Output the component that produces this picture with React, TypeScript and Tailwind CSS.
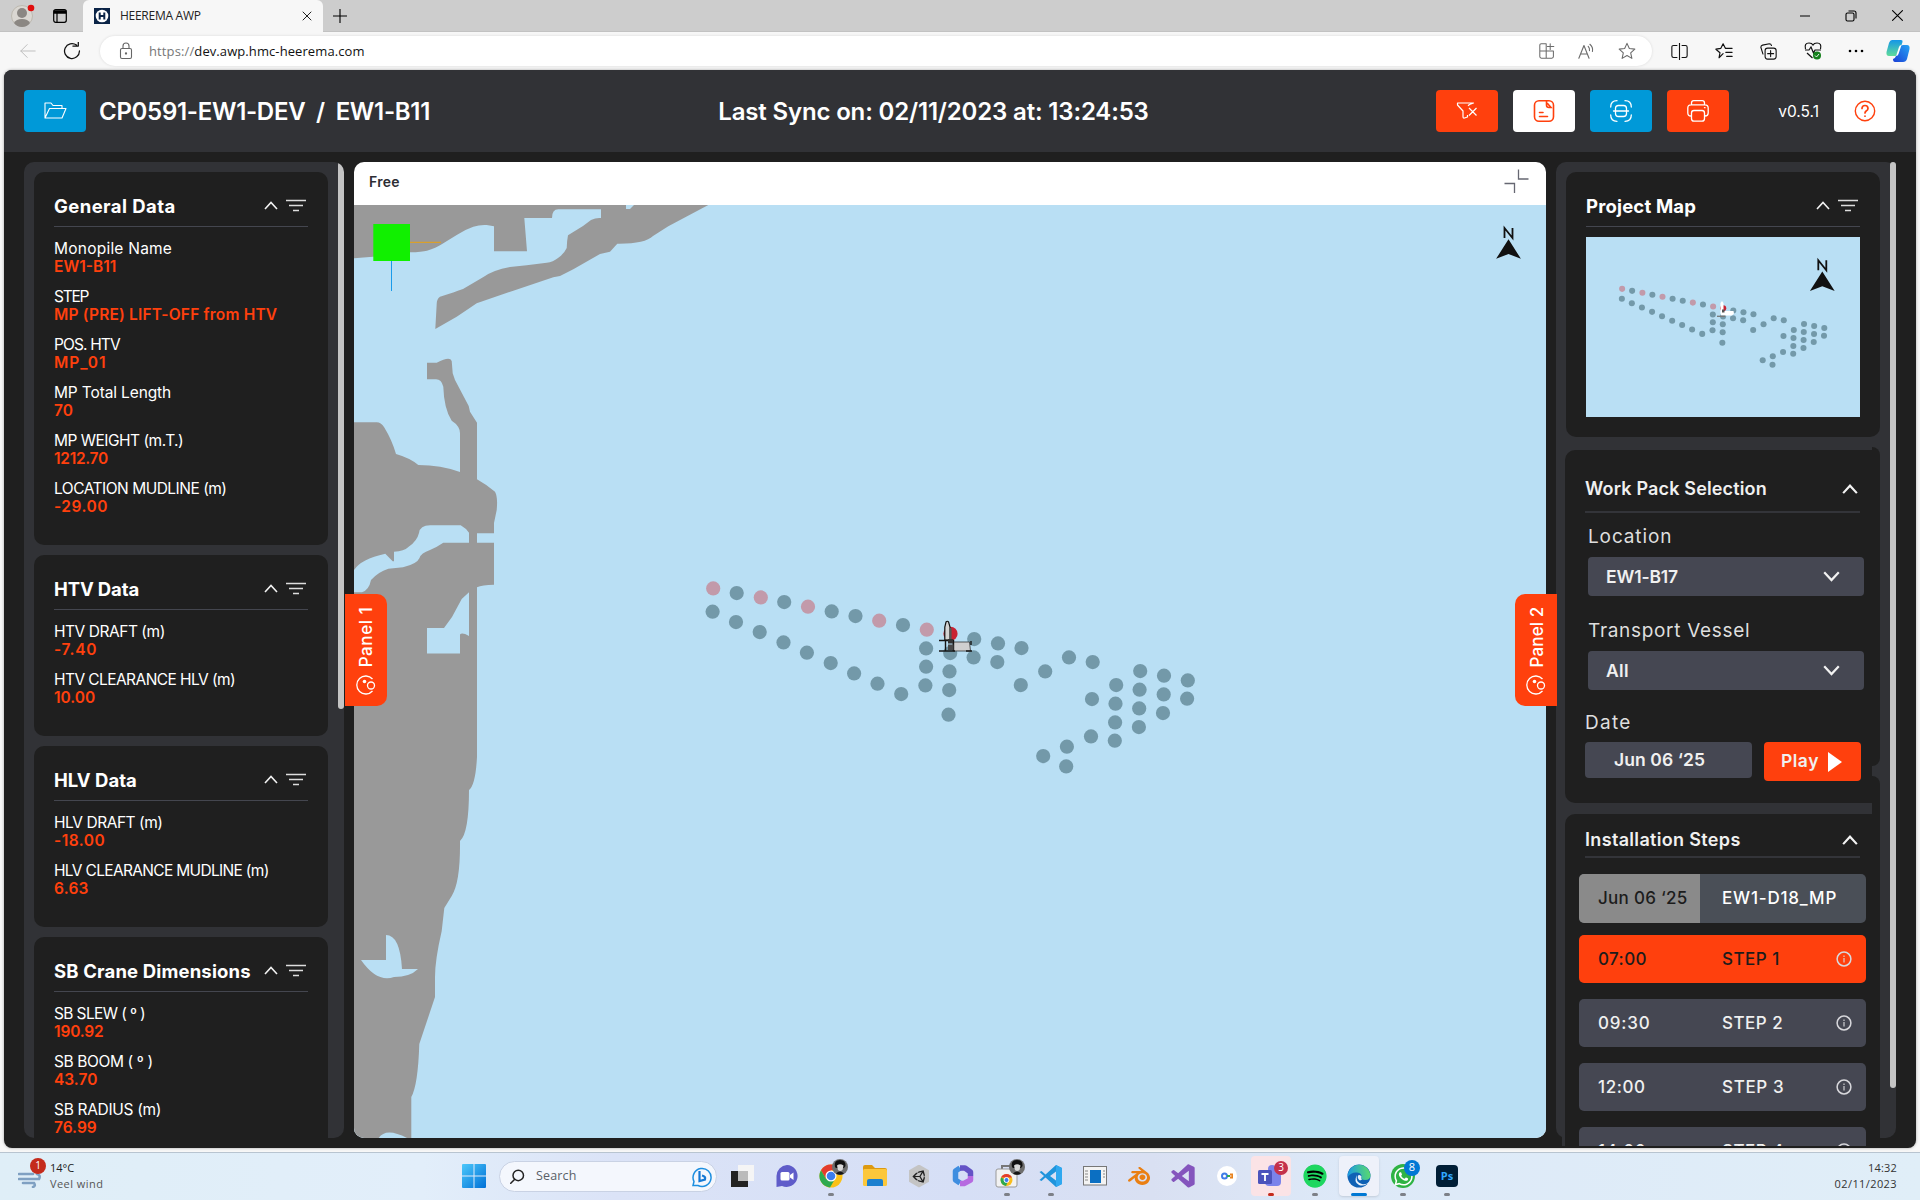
import { useLayoutEffect, useRef } from "react";
import type { ReactNode } from "react";
import { FaSpotify, FaUnity, FaWhatsapp } from "react-icons/fa";
import { SiBlender } from "react-icons/si";
import { BiLogoVisualStudio } from "react-icons/bi";

/* Text whose letter spacing is set so that it spans `w` pixels. */
function Fit({ w, className = "", children }: { w: number; className?: string; children: string }) {
  const ref = useRef<HTMLSpanElement>(null);
  useLayoutEffect(() => {
    const el = ref.current;
    if (!el) return;
    el.style.letterSpacing = "0px";
    el.style.letterSpacing = `${((w - el.offsetWidth) / children.length).toFixed(3)}px`;
  }, [w, children]);
  return (
    <span ref={ref} className={`inline-block whitespace-pre ${className}`}>
      {children}
    </span>
  );
}

const PINK: [number, number][] = [
  [713, 588], [760.6, 597], [807.8, 606.3], [879, 620.3], [926.6, 629.3],
];
const TEAL: [number, number][] = [
  [736.5, 592.7], [784, 601.7], [831.5, 611], [855.3, 615.7], [902.8, 624.7],
  [712.4, 611.3], [735.8, 621.7], [759.5, 631.7], [783.3, 642], [806.7, 652.3],
  [830.5, 662.7], [853.9, 673], [877.3, 683.3], [901, 693.7],
  [925.9, 648], [925.9, 666.3], [925.2, 685],
  [950, 652.7], [949.3, 671], [949, 689.7], [948.3, 714.3],
  [974, 638.7], [973.4, 657], [997.8, 643], [997.1, 661.7], [1021.3, 647.7],
  [1020.6, 684.7], [1045, 671], [1068.8, 657], [1092.5, 661.7], [1091.8, 698.7],
  [1116, 684.7], [1115.3, 703.3], [1114.9, 722], [1114.6, 740.3],
  [1140, 670.7], [1139.4, 689.3], [1139, 708], [1138.7, 726.7],
  [1163.8, 675.3], [1163.5, 694], [1162.8, 712.7], [1187.6, 680], [1186.9, 698.3],
  [1090.8, 736], [1066.7, 746.3], [1066, 766], [1043, 755.7],
];

function Farm() {
  return (
    <g>
      {TEAL.map(([x, y]) => (
        <circle key={`${x}-${y}`} cx={x + 0.2} cy={y + 0.4} r="7.1" fill="#7399a9" />
      ))}
      {PINK.map(([x, y]) => (
        <circle key={`${x}-${y}`} cx={x + 0.2} cy={y + 0.4} r="7.1" fill="#c29aaa" />
      ))}
      <circle cx="950.5" cy="633.8" r="7.1" fill="#c92233" />
    </g>
  );
}

function North({ x, y }: { x: number; y: number }) {
  return (
    <g transform={`translate(${x} ${y})`}>
      <path d="M-4 -1.300V-11.300L4 -1.300V-11.300" fill="none" stroke="#111" strokeWidth="1.800" />
      <path d="M0 0L12.400 19.500L0 14.800L-12.400 19.500Z" fill="#111" />
    </g>
  );
}

function MainMap() {
  return (
    <svg viewBox="354 205 1192 933" className="block h-[933px] w-full bg-[#b9dff4]">
      <g fill="#999">
        <path d="M354 205V258.3L373 256.7L410 252.3Q422 252 427 250.7Q436 248 441.7 244.3L456.7 235Q465 229.500 473.3 226.7Q480 224.500 486.700 225L494 226.300V251.300H527L524.300 218H552Q552 209.300 558.300 209.300H601V218Q596 217.500 591 220L583 226L568 235.300Q567 240 566.700 248Q564 254 558 258Q553 262 546.700 262.700L526.700 265.300L510 267Q493 270 483 277.300L463 289Q455 292 440 296.700Q436.700 299 436.700 304L435.300 329L456.700 316.700Q467 310 476.700 303.300L513.300 290.700L553.300 277.300L560 276L573.300 269.300L600 254L610 251.700L617.300 243.700Q645 244 653 236L668.300 226.300L708.300 205Z" />
        <path d="M427 362.700H436.700Q450 356 451.700 361L452.700 373.300L455 380L468.700 406L470 411.700L477 422.700V479.300Q487 485 495 491.700Q498 497 496.700 510L494 523V533.300H477V542.700H494V584.700Q482 585 477 587.300V757Q475.500 785 469 790Q469 833 460 841Q460.500 882 451.700 896L444.300 908L441.700 931Q435 960 435 977V997L419.300 1044Q418 1085 411.300 1097V1138H354V422.300H376.700Q381 422.500 384 427Q392 440 396 454Q410 458 418.300 465Q441 465 460 472V433.300Q460 426 451.700 420.700Q444 409 443.300 386.700Q441.500 379.300 436 379.300H427Z" />
      </g>
      <g fill="#b9dff4">
        <path d="M626 205V209H630L634 205Z" />
        <path d="M354 570Q361 559 385.300 553.700L392.700 561.300H394V551.700Q404 551.500 409 546.500Q417 541 419 533Q420 525.300 430 525.300H460.700L466 529L469 532.700V542.700H443.300Q437 547 430 550Q421 553 419.500 558Q417 564 403 567.300L388.300 568.700Q378 572 371 580Q369 590 362 592.300H354Z" />
        <path d="M427 628H444L452 617L461.700 599L469 592.300V636Q462 632 460 634.500V653.600H427Z" />
        <path d="M361 960H386V935Q400 935 402 969H418Q410 977 394 977Q377 983 361 960Z" />
        <path d="M378.700 1138Q386 1127 407 1138Z" />
      </g>
      <rect x="373.300" y="224" width="36.700" height="37" fill="#11f000" />
      <path d="M410 242.300H441" stroke="#d9a02c" strokeWidth="1.300" />
      <path d="M391.500 261V291" stroke="#1a9bea" strokeWidth="1" />
      <Farm />
      <path d="M944.800 640V627L946 622Q947.300 620.500 948.600 622L950 627V640Z" fill="#d4d4d4" stroke="#111" strokeWidth="1.200" />
      <path d="M950.800 628V639" stroke="#555" strokeWidth="1.600" />
      <path d="M953 642H969.500L970.500 651H953Z" fill="#cfcfcf" stroke="#333" strokeWidth=".8" />
      <path d="M939 640.500H954M939 651H955M945.500 640V651M953.500 640V651M966 651H972M971 641V645" stroke="#161616" strokeWidth="1.400" fill="none" />
      <rect x="948" y="639" width="5" height="4.500" fill="#333" />
      <rect x="948" y="644.500" width="5.500" height="5.500" fill="#4a4a4a" />
      <North x={1508.5} y={239.3} />
    </svg>
  );
}

function MiniMap() {
  return (
    <svg viewBox="1586 237 274 180" className="block h-[180px] w-[274px] bg-[#b9dff4]">
      <g transform="translate(1318.3 38.200) scale(.426)">
        <Farm />
      </g>
      <path d="M1720.500 313V303L1722 301L1723.500 303V311H1733.500L1734 313.500L1732 315.500H1721Z" fill="#fff" />
      <path d="M1717 316.300H1725" stroke="#777" strokeWidth="1.300" />
      <rect x="1722" y="309.500" width="2.500" height="3" fill="#555" />
      <North x={1822.3} y={271.5} />
    </svg>
  );
}

/* ---------- browser chrome ---------- */

function Ico({ children, s = 20, className = "", w = 1 }: { children: ReactNode; s?: number; className?: string; w?: number }) {
  return (
    <svg viewBox="0 0 20 20" width={s} height={s} fill="none" stroke="currentColor" strokeWidth={w} strokeLinecap="round" strokeLinejoin="round" className={`shrink-0 ${className}`}>
      {children}
    </svg>
  );
}

function TabBar() {
  return (
    <div className="flex h-8 border-b border-[#c2c2c2] bg-[#cdcdcd]">
      <div className="flex w-[83px] items-center pl-[9px]">
        <svg viewBox="0 0 26 26" className="size-[26px]">
          <circle cx="13" cy="13" r="10.500" fill="#dad7d2" stroke="#bdb9b0" />
          <circle cx="13" cy="10" r="5" fill="#8b8783" />
          <path d="M5 20Q7 16 13 16T21 20Q18 24 13 24T5 20Z" fill="#8b8783" />
          <circle cx="22" cy="5" r="3.300" fill="#e00d0d" />
        </svg>
        <svg viewBox="0 0 14 14" className="ml-[18px] size-[14px]" fill="none" stroke="#000" strokeWidth="1.200">
          <rect x=".7" y=".7" width="12.600" height="12.600" rx="2" />
          <path d="M.7 3H13.300" strokeWidth="3.500" />
          <path d="M4 3V13" />
        </svg>
      </div>
      <div className="flex h-8 w-[240px] items-center rounded-t-md bg-[#f7f7f7] pl-[11px]">
        <svg viewBox="0 0 16 16" className="size-4">
          <rect width="16" height="16" fill="#0b2447" />
          <circle cx="8" cy="8" r="6.300" fill="#fff" />
          <path d="M5.700 4.500V11.500M10.300 4.500V11.500M5.700 8H10.300" stroke="#0b2447" strokeWidth="2" />
        </svg>
        <Fit w={81} className="ml-[10px] text-[12px] text-[#222]">HEEREMA AWP</Fit>
        <Ico s={10} w={2} className="ml-[101px] mr-auto text-[#222]">
          <path d="M2 2L18 18M18 2L2 18" />
        </Ico>
      </div>
      <Ico s={14} w={1.6} className="ml-[10px] mt-[9px] text-black">
        <path d="M10 0V20M0 10H20" />
      </Ico>
      <div className="ml-auto flex items-center pr-[17px] text-black">
        <Ico s={10} w={2}><path d="M0 10H20" /></Ico>
        <svg viewBox="0 0 12 12" className="ml-[35px] size-3" fill="none" stroke="#000" strokeWidth="1.100">
          <rect x="1" y="3" width="8" height="8" rx="1.500" />
          <path d="M3.500 1H9Q11 1 11 3V8.500" />
        </svg>
        <Ico s={11} w={2} className="ml-[35px]"><path d="M1 1L19 19M19 1L1 19" /></Ico>
      </div>
    </div>
  );
}

function UrlBar() {
  return (
    <div className="flex h-[38px] items-center bg-[#f7f7f7]">
      <Ico s={16} w={1.2} className="ml-5 text-[#bdbdbd]"><path d="M19 10H1M9 2L1 10L9 18" /></Ico>
      <Ico s={18} w={1.4} className="ml-[27px] text-[#111]">
        <path d="M18.300 10A8.300 8.300 0 1 1 15 3.400M11 4.500H17V0" />
      </Ico>
      <div className="ml-[19px] flex h-[30px] w-[1552px] items-center rounded-full bg-white pl-[18px] shadow-[0_0_3px_rgba(0,0,0,.12)]">
        <svg viewBox="0 0 16 18" className="h-[18px] w-4" fill="none" stroke="#666" strokeWidth="1.100">
          <rect x="2.500" y="6.500" width="11" height="10" rx="1.500" />
          <path d="M5 6V4A3 3 0 0 1 11 4V6" />
          <circle cx="8" cy="11.500" r=".6" fill="#666" />
        </svg>
        <span className="ml-[15px] flex pt-px text-[13px]">
          <Fit w={45} className="text-[#777]">https://</Fit>
          <Fit w={170} className="text-[#111]">dev.awp.hmc-heerema.com</Fit>
        </span>
        <div className="ml-auto mr-4 flex items-center gap-[23px] text-[#6b6b6b]">
          <Ico s={16} w={1.3}><path d="M9 1H3Q1 1 1 3V17Q1 19 3 19H16Q18 19 18 17V10H1M9 1V19M14 1V8M10.500 4.500H18.500" /></Ico>
          <Ico s={17} w={1.3}><path d="M1 18L7 3L13 18M3 13H11M12 4Q14 6 13.500 9M14 1.500Q18 5 17 10" /></Ico>
          <Ico s={18} w={1.2}><path d="M10 1.500L12.600 7.200L18.700 7.900L14.100 12.100L15.400 18.200L10 15.100L4.600 18.200L5.900 12.100L1.300 7.900L7.400 7.200Z" /></Ico>
        </div>
      </div>
      <div className="ml-[19px] flex items-center gap-[27px] text-[#111]">
        <Ico s={17} w={1.3}><path d="M7 3H3Q1 3 1 5V15Q1 17 3 17H7M13 3H17Q19 3 19 5V15Q19 17 17 17H13M10 0V20" /></Ico>
        <Ico s={18} w={1.3}><path d="M9 13L4.500 17.500L5.500 12L1 8L6.500 7L9 2L11.500 7M12 7H19M12 11.500H19M13 16H19" /></Ico>
        <Ico s={17} w={1.3}>
          <rect x="6" y="6" width="13" height="13" rx="3" />
          <path d="M12.500 9V16M9 12.500H16M3.500 13L1 5Q1 3 3 2.500L11 .8Q13 .8 13.500 3" />
        </Ico>
        <svg viewBox="0 0 18 18" className="size-[18px]" fill="none" stroke="#111" strokeWidth="1.200">
          <path d="M1.500 7Q0 1 5 1Q8 1 9 3Q10 1 13 1Q18 1 16.500 7M1 8H5L7 5L9.500 11L11 8H17M3 11L8.500 16" />
          <circle cx="13" cy="13.500" r="4" fill="#15801c" stroke="none" />
          <path d="M11 13.500L12.500 15L15 12" stroke="#fff" strokeWidth=".9" />
        </svg>
        <svg viewBox="0 0 16 4" className="-ml-px h-1 w-4"><circle cx="2" cy="2" r="1.300" /><circle cx="8" cy="2" r="1.300" /><circle cx="14" cy="2" r="1.300" /></svg>
      </div>
      <svg viewBox="0 0 24 24" className="ml-auto mr-[10px] size-6">
        <defs>
          <linearGradient id="cpA" x1="0" y1="0" x2="0" y2="1"><stop stopColor="#1496e8" /><stop offset="1" stopColor="#5fdc9a" /></linearGradient>
          <linearGradient id="cpB" x1="0" y1="1" x2="1" y2="0"><stop stopColor="#1b3fd6" /><stop offset="1" stopColor="#25a4f4" /></linearGradient>
        </defs>
        <path d="M6 1H15Q17 1 16.500 3L12.500 15Q12 17 9 17H3Q0 17 .5 13L3 4Q4 1 6 1Z" fill="url(#cpA)" />
        <path d="M17 6H21Q24 6 23.500 10L21 20Q20 23 17 23H9Q7 23 7 20Q9 20 10 17L14 8Q15 6 17 6Z" fill="url(#cpB)" />
        <path d="M10 17L13 8Q13.500 6 15.500 6L12.500 15Q12 17 10 17Z" fill="#fff" />
      </svg>
    </div>
  );
}

/* ---------- application header ---------- */

function HeaderButton({ tone, className = "", children }: { tone: string; className?: string; children: ReactNode }) {
  return <button className={`flex h-[42px] w-[62px] items-center justify-center rounded ${tone} ${className}`}>{children}</button>;
}

function Header() {
  return (
    <header className="grid h-[82px] grid-cols-[1fr_auto_1fr] items-center rounded-t-lg bg-[#313236] px-5 text-white">
      <div className="flex items-center">
        <HeaderButton tone="bg-[#0099d8]">
          <svg viewBox="0 0 24 20" className="h-5 w-6" fill="none" stroke="#fff" strokeWidth="1.100" strokeLinejoin="round">
            <path d="M2 17V2H8L10 4.500H19V7.500M2 17L6.500 7.500H23L19 17Z" />
          </svg>
        </HeaderButton>
        <h1 className="mt-[2px] ml-[13px] text-[24px] font-semibold [word-spacing:5px]">
          <Fit w={331}>CP0591-EW1-DEV / EW1-B11</Fit>
        </h1>
      </div>
      <div className="mt-[2px] -ml-[53px] text-[24px] font-semibold">
        <Fit w={430}>Last Sync on: 02/11/2023 at: 13:24:53</Fit>
      </div>
      <div className="flex items-center justify-end">
        <HeaderButton tone="bg-[#ff400d]">
          <svg viewBox="0 0 22 20" className="h-5 w-[22px]" fill="none" stroke="#fff" strokeWidth="1.200" strokeLinejoin="round">
            <path d="M12 4.800L13.500 3.500L17.500 2H1.500V4L7 10V15.500Q7 17.500 8.500 17L11.500 16V14M13 7L20.500 14.500M20.500 7L13 14.500" />
          </svg>
        </HeaderButton>
        <HeaderButton tone="bg-white" className="ml-[15px]">
          <svg viewBox="0 0 22 22" className="size-[22px]" fill="none" stroke="#ff400d" strokeWidth="1.600" strokeLinecap="round">
            <rect x="1.500" y=".8" width="19" height="20.400" rx="4.500" />
            <path d="M13.500 1V5Q13.500 7.500 16 7.500H18L14.500 3.500M6.500 12.500H10M6.500 16.500H14.500" />
          </svg>
        </HeaderButton>
        <HeaderButton tone="bg-[#0099d8]" className="ml-[15px]">
          <svg viewBox="0 0 22 22" className="size-[22px]" fill="none" stroke="#fff" strokeWidth="1.300" strokeLinecap="round">
            <path d="M.7 7Q.7 .7 7 .7M15 .7Q21.300 .7 21.300 7M21.300 15Q21.300 21.300 15 21.300M7 21.300Q.7 21.300 .7 15M3.500 11H18.500" />
            <rect x="5.500" y="5.500" width="11" height="11" rx="3" />
          </svg>
        </HeaderButton>
        <HeaderButton tone="bg-[#ff400d]" className="ml-[15px]">
          <svg viewBox="0 0 22 22" className="size-[22px]" fill="none" stroke="#fff" strokeWidth="1.300" strokeLinecap="round">
            <path d="M4.500 4.800V3Q4.500 .7 6.700 .7H15.300Q17.500 .7 17.500 3V4.800M4 16Q.8 16 .8 13V8Q.8 4.800 4 4.800H18Q21.200 4.800 21.200 8V13Q21.200 16 18 16M4.500 13Q4.500 10.500 7 10.500H15Q17.500 10.500 17.500 13V18.500Q17.500 21.200 15 21.200H7Q4.500 21.200 4.500 18.500ZM17.500 7.700H18" />
          </svg>
        </HeaderButton>
        <Fit w={41} className="mt-px ml-[49px] text-[15.500px]">v0.5.1</Fit>
        <HeaderButton tone="bg-white" className="ml-[15px]">
          <svg viewBox="0 0 22 22" className="size-[22px]" fill="none" stroke="#ff400d" strokeWidth="1.400" strokeLinecap="round">
            <circle cx="11" cy="11" r="9.700" />
            <path d="M8 8.500Q8 5.500 11 5.500T14 8.500Q14 10 12.200 11Q11 12 11 13M11 16V16.200" strokeWidth="1.700" />
          </svg>
        </HeaderButton>
      </div>
    </header>
  );
}

/* ---------- side panels ---------- */

function Chevron({ up = false, s = 14, w = 1.6 }: { up?: boolean; s?: number; w?: number }) {
  return (
    <svg viewBox="0 0 14 9" width={s} height={(s * 9) / 14} fill="none" stroke="#f2f2f2" strokeWidth={w} className="shrink-0">
      {up ? <path d="M1 8L7 1.500L13 8" /> : <path d="M1 1L7 7.500L13 1" />}
    </svg>
  );
}

function CardHead({ title, w }: { title: string; w: number }) {
  return (
    <div className="flex h-[35px] items-center border-b border-[#44464f]">
      <h2 className="-mt-[6px] text-[18.500px] leading-6 font-bold">
        <Fit w={w}>{title}</Fit>
      </h2>
      <div className="-mt-[7px] ml-auto flex items-center gap-2 pr-[2px]">
        <Chevron up />
        <svg viewBox="0 0 20 13" className="h-[13px] w-5" stroke="#ddd" strokeWidth="1.600">
          <path d="M0 1.500H20M3 6.500H17M7 11.500H13" />
        </svg>
      </div>
    </div>
  );
}

type Row = [string, number, string, number];

function DataCard({ title, w, rows }: { title: string; w: number; rows: Row[] }) {
  return (
    <section className="shrink-0 rounded-[10px] bg-[#1f1f1f] px-5 pt-5 pb-[29px]">
      <CardHead title={title} w={w} />
      <dl className="mt-[13px] flex flex-col gap-3 text-[15.500px] leading-[18px]">
        {rows.map(([label, lw, value, vw]) => (
          <div key={label} className="flex h-9 flex-col items-start">
            <dt className="h-[19px]"><Fit w={lw}>{label}</Fit></dt>
            <dd className="h-[18px] font-semibold text-[#ff400d]"><Fit w={vw}>{value}</Fit></dd>
          </div>
        ))}
      </dl>
    </section>
  );
}

function LeftPanel() {
  return (
    <aside className="flex h-[976px] w-[320px] shrink-0 overflow-hidden rounded-[10px] bg-[#313236]">
      <div className="flex w-[304px] flex-col gap-[10px] pt-[10px] pl-[10px]">
        <DataCard title="General Data" w={122} rows={[
          ["Monopile Name", 118, "EW1-B11", 62],
          ["STEP", 34, "MP (PRE) LIFT-OFF from HTV", 223],
          ["POS. HTV", 66, "MP_01", 53],
          ["MP Total Length", 117, "70", 19],
          ["MP WEIGHT (m.T.)", 129, "1212.70", 54],
          ["LOCATION MUDLINE (m)", 173, "-29.00", 54],
        ]} />
        <DataCard title="HTV Data" w={85} rows={[
          ["HTV DRAFT (m)", 111, "-7.40", 43],
          ["HTV CLEARANCE HLV (m)", 181, "10.00", 41],
        ]} />
        <DataCard title="HLV Data" w={83} rows={[
          ["HLV DRAFT (m)", 109, "-18.00", 51],
          ["HLV CLEARANCE MUDLINE (m)", 215, "6.63", 35],
        ]} />
        <DataCard title="SB Crane Dimensions" w={197} rows={[
          ["SB SLEW ( º )", 91, "190.92", 50],
          ["SB BOOM ( º )", 99, "43.70", 43],
          ["SB RADIUS (m)", 107, "76.99", 43],
        ]} />
      </div>
      <div className="ml-auto h-[547px] w-[6px] rounded-full bg-[#c4c4c4]" />
    </aside>
  );
}

function InfoDot() {
  return (
    <svg viewBox="0 0 16 16" className="size-4" fill="none" stroke="#d8d8dc" strokeWidth="1.500">
      <circle cx="8" cy="8" r="6.900" />
      <path d="M8 7V11.500M8 4.500V6" strokeWidth="1.600" opacity=".7" />
    </svg>
  );
}

function Select({ value, w }: { value: string; w: number }) {
  return (
    <div className="flex h-[39px] w-[276px] items-center justify-between rounded bg-[#454752] pr-6 pl-[18px] text-[17.500px] font-semibold text-[#f0f0f0]">
      <Fit w={w} className="mt-px">{value}</Fit>
      <Chevron s={17} w={1.8} />
    </div>
  );
}

function StepRow({ time, name, tw, nw, tone }: { time: string; name: string; tw: number; nw: number; tone: string }) {
  return (
    <div className={`flex h-12 w-[287px] shrink-0 items-center rounded-[5px] pl-[19px] text-[17px] font-medium ${tone}`}>
      <div className="mt-px w-[124px]"><Fit w={tw}>{time}</Fit></div>
      <Fit w={nw} className="mt-px">{name}</Fit>
      <div className="ml-auto mr-[14px]"><InfoDot /></div>
    </div>
  );
}

function WorkPackCard() {
  return (
    <section className="h-[353px] rounded-l-[10px] bg-[#1f1f1f] pl-5">
      <div className="flex h-[63px] w-[275px] items-end justify-between border-b-2 border-[#333439] pr-[2px] pb-[10px]">
        <h2 className="text-[18px] leading-6 font-semibold text-[#f0f0f0]"><Fit w={182}>Work Pack Selection</Fit></h2>
        <div className="pb-[7px]"><Chevron up s={16} w={1.9} /></div>
      </div>
      <div className="pl-[3px]">
        <div className="mt-3 h-8 text-[19px] leading-6 text-[#dedede]"><Fit w={84}>Location</Fit></div>
        <Select value="EW1-B17" w={72} />
        <div className="mt-[23px] h-[32px] text-[19px] leading-6 text-[#dedede]"><Fit w={162}>Transport Vessel</Fit></div>
        <Select value="All" w={23} />
      </div>
      <div className="mt-[21px] h-[31px] text-[19px] leading-6 text-[#dedede]"><Fit w={47}>Date</Fit></div>
      <div className="flex items-start gap-3 text-[17.500px] font-semibold text-[#f0f0f0]">
        <div className="flex h-9 w-[167px] items-center rounded bg-[#454752] pl-[29px]"><Fit w={91}>Jun 06 ‘25</Fit></div>
        <button className="flex h-[39px] w-[97px] items-center gap-[9px] rounded bg-[#ff400d] pl-[17px]">
          <Fit w={38}>Play</Fit>
          <svg viewBox="0 0 14 20" className="h-5 w-[14px]"><path d="M0 0L14 10L0 20Z" fill="#fff" /></svg>
        </button>
      </div>
    </section>
  );
}

function StepsCard() {
  return (
    <section className="mt-[11px] h-[332px] overflow-hidden rounded-tl-[10px] bg-[#1f1f1f] pl-[14px]">
      <div className="ml-[6px] flex h-[44px] w-[275px] items-end justify-between border-b-2 border-[#333439] pr-[2px] pb-1">
        <h2 className="text-[18px] leading-6 font-semibold text-[#f0f0f0]"><Fit w={156}>Installation Steps</Fit></h2>
        <div className="pb-[7px]"><Chevron up s={16} w={1.9} /></div>
      </div>
      <div className="mt-4 flex h-[49px] w-[287px] items-center overflow-hidden rounded-[5px] bg-[#4a4f57] text-[17px] font-medium">
        <div className="flex h-full w-[121px] items-center bg-[#8a8a8a] pt-px pl-[19px] text-[#1c1c1c]"><Fit w={90}>Jun 06 ‘25</Fit></div>
        <Fit w={115} className="ml-[22px]">EW1-D18_MP</Fit>
      </div>
      <div className="mt-3 flex flex-col gap-4">
        <StepRow time="07:00" tw={49} name="STEP 1" nw={58} tone="bg-[#ff400d] text-[#1c1c1c]" />
        <StepRow time="09:30" tw={52} name="STEP 2" nw={61} tone="bg-[#454752] text-[#f0f0f0]" />
        <StepRow time="12:00" tw={48} name="STEP 3" nw={62} tone="bg-[#454752] text-[#f0f0f0]" />
        <StepRow time="14:00" tw={48} name="STEP 4" nw={62} tone="bg-[#454752] text-[#f0f0f0]" />
      </div>
    </section>
  );
}

function RightPanel() {
  return (
    <aside className="flex h-[976px] w-[340px] shrink-0 rounded-[10px] bg-[#313236]">
      <div className="w-[324px] pt-[10px]">
        <section className="ml-[10px] h-[265px] rounded-[10px] bg-[#1f1f1f] px-5 pt-5">
          <CardHead title="Project Map" w={110} />
          <div className="mt-[10px]"><MiniMap /></div>
        </section>
        <div className="mt-[10px] ml-[6px] flex h-[699px]">
          <div className="w-[310px] bg-[#313236] pt-[3px] pl-[3px]">
            <WorkPackCard />
            <StepsCard />
          </div>
          <div className="flex w-2 flex-col gap-[10px]">
            <div className="h-[319px] rounded-r-lg bg-[#1f1f1f]" />
            <div className="flex-1 rounded-tr-lg bg-[#1f1f1f]" />
          </div>
        </div>
      </div>
      <div className="ml-auto h-[926px] w-[6px] rounded-full bg-[#c4c4c4]" />
    </aside>
  );
}

function PanelTab({ label, side }: { label: string; side: string }) {
  return (
    <button className={`absolute top-[524px] flex h-[112px] w-[42px] flex-col items-center justify-end bg-[#ff400d] pb-[11px] text-white ${side}`}>
      <span className="flex h-[62px] w-5 items-center justify-center">
        <span className="-rotate-90 text-[17px] leading-5 font-medium"><Fit w={61}>{label}</Fit></span>
      </span>
      <svg viewBox="0 0 20 20" className="mt-[7px] size-5" fill="none" stroke="#fff" strokeWidth="1.300">
        <path d="M16.500 4A9 9 0 1 0 16.500 16" />
        <circle cx="15" cy="10.500" r="3.500" />
        <circle cx="8.500" cy="6.500" r="1.800" fill="#fff" stroke="none" />
      </svg>
    </button>
  );
}

/* ---------- taskbar ---------- */

function Task({ children, dot = "", tile = "" }: { children: ReactNode; dot?: string; tile?: string }) {
  return (
    <div className="relative flex h-12 w-11 items-center justify-center pb-px">
      <div className={`flex size-10 items-center justify-center rounded ${tile}`}>{children}</div>
      {dot && <div className={`absolute bottom-[5px] h-[3px] rounded-full ${dot}`} />}
    </div>
  );
}

const GREY_DOT = "w-[6px] bg-[#7d8087]";

function Face({ className }: { className: string }) {
  return (
    <svg viewBox="0 0 16 16" className={`absolute size-4 ${className}`}>
      <circle cx="8" cy="8" r="8" fill="#6e6e6e" />
      <path d="M3 8Q1.500 1 8 1Q14 1 13.500 7L12 9H4Z" fill="#111" />
      <path d="M5 6.500Q8 4 11.500 6.500L10.500 11Q8 13 6 11Z" fill="#d8d8d8" />
      <path d="M4 14.500Q8 10.500 12 14.500Q8 17 4 14.500Z" fill="#151515" />
    </svg>
  );
}

function Taskbar() {
  return (
    <footer className="flex h-12 items-center border-t border-[#b8c4d0] bg-[linear-gradient(90deg,#dfeef7_0%,#e2eefa_22%,#dbe3f7_32%,#d6dff6_50%,#d9e0f2_60%,#dde9f8_70%,#e0eef8_100%)]">
      <div className="relative flex w-[454px] items-center pb-[2px] pl-[18px]">
        <svg viewBox="0 0 24 20" className="mt-1 h-5 w-6" fill="none" stroke="#7fa0c2" strokeWidth="2.600" strokeLinecap="round">
          <path d="M1 6H15M1 11H21Q23 7 19 6M5 15H16Q18 18 15 19" />
        </svg>
        <div className="absolute left-[30px] top-[-2px] flex h-[16px] w-4 items-center justify-center rounded-full bg-[#c42b1c] text-[10px] text-white">1</div>
        <div className="ml-2 text-[11px] leading-4 text-[#222]">
          <div><Fit w={24}>14°C</Fit></div>
          <div><Fit w={53} className="text-[#555]">Veel wind</Fit></div>
        </div>
      </div>
      <svg viewBox="0 0 24 24" className="mb-px ml-2 size-6" >
        <defs><linearGradient id="win" x2="1" y2="1"><stop stopColor="#4cc8fb" /><stop offset="1" stopColor="#0070d6" /></linearGradient></defs>
        <path d="M0 1Q0 0 1 0H11.500V11.500H0ZM12.500 0H23Q24 0 24 1V11.500H12.500ZM0 12.500H11.500V24H1Q0 24 0 23ZM12.500 12.500H24V23Q24 24 23 24H12.500Z" fill="url(#win)" />
      </svg>
      <div className="ml-[13px] flex h-[31px] w-[218px] items-center rounded-full border border-[#c9d2e4] bg-[#f4f7fd] pl-[10px]">
        <Ico s={15} w={2} className="text-[#222]"><circle cx="11" cy="8.500" r="7" /><path d="M6 14L1 19" /></Ico>
        <Fit w={41} className="ml-[11px] text-[12.500px] text-[#5a5f68]">Search</Fit>
        <svg viewBox="0 0 22 22" className="ml-auto mr-[3px] size-[22px]" fill="none">
          <path d="M2 19.500L3 15.500A9 9 0 1 1 7 19.500Z" stroke="#1d8fe0" strokeWidth="1.500" />
          <path d="M8.500 5V15L14 13.500Q15 10.500 11 9.500" stroke="#1478d4" strokeWidth="2.200" />
        </svg>
      </div>
      <div className="ml-1 flex">
        <Task>
          <svg viewBox="0 0 24 24" className="size-6"><rect x="0" y="7" width="17" height="16" fill="#222" /><rect x="7" y="1" width="16" height="16" fill="#f5f5f5" /><rect x="7" y="7" width="10" height="10" fill="#bbb" /></svg>
        </Task>
        <Task>
          <svg viewBox="0 0 24 24" className="size-6"><path d="M12 1A11 11 0 1 1 7 22L1.500 23V12A11 11 0 0 1 12 1Z" fill="#5f5cc9" /><rect x="5.500" y="8" width="9" height="8.500" rx="1.500" fill="#fff" /><path d="M15 11L18.500 8.500V16L15 13.500Z" fill="#fff" /></svg>
        </Task>
        <Task dot={GREY_DOT}>
          <svg viewBox="0 0 24 24" className="size-6">
            <circle cx="12" cy="12" r="11.500" fill="#fbc116" />
            <path d="M2 6.200A11.500 11.500 0 0 1 22 6.200H12V12L7 15Z" fill="#e33b2e" />
            <path d="M2 6.200A11.500 11.500 0 0 0 11 23.500L16 15L7 15Z" fill="#2da94f" />
            <circle cx="12" cy="12" r="5.500" fill="#fff" /><circle cx="12" cy="12" r="4.300" fill="#3b7ded" />
          </svg>
          <Face className="left-[23px] top-[6px]" />
        </Task>
        <Task>
          <svg viewBox="0 0 24 24" className="size-6"><path d="M0 3Q0 1 2 1H9L12 4H22Q24 4 24 6V8H0Z" fill="#dd9a10" /><rect y="5" width="24" height="17" rx="1.500" fill="#fcc73b" /><path d="M4 22V17Q4 15 6 15H18Q20 15 20 17V22Z" fill="#1c80cf" /></svg>
        </Task>
        <Task>
          <span className="flex h-[23px] w-5 items-center justify-center bg-[#c4c4c4] [clip-path:polygon(50%_0,100%_25%,100%_75%,50%_100%,0_75%,0_25%)]"><FaUnity className="size-[15px] text-[#222]" /></span>
        </Task>
        <Task>
          <svg viewBox="0 0 24 24" className="size-6" fill="none" strokeWidth="5.500" strokeLinejoin="round">
            <path d="M9 4L4.500 7V16L9 19" stroke="#3f8ee0" /><path d="M9 4H14L19.500 8V12" stroke="#6453c6" /><path d="M9 19.500H13L19.500 16V12" stroke="#b66ae0" />
          </svg>
        </Task>
        <Task dot={GREY_DOT}>
          <svg viewBox="0 0 24 24" className="size-6"><path d="M7 6V2H17V6" fill="none" stroke="#777" strokeWidth="2" /><rect x="1" y="5" width="21" height="18" rx="2" fill="#f2f2f2" stroke="#999" /><circle cx="11.500" cy="16" r="6" fill="#f9bd1c" /><path d="M6 13.500A6 6 0 0 1 17 13.500H11.500Z" fill="#e33b2e" /><path d="M6 13.500A6 6 0 0 0 11 22L13 17Z" fill="#2da94f" /><circle cx="11.500" cy="16" r="2.500" fill="#3b7ded" stroke="#fff" /></svg>
          <Face className="left-[24px] top-[6px]" />
        </Task>
        <Task dot={GREY_DOT}>
          <svg viewBox="0 0 24 24" className="size-6"><path d="M17 1L23 4V20L17 23L6.500 13.500L2.500 17L.5 16L5 12L.5 8L2.500 7L6.500 10.500ZM17 7.500L11 12L17 16.500Z" fill="#1f94dc" fillRule="evenodd" /><path d="M17 1L23 4V20L17 23Z" fill="#2fa8f0" /></svg>
        </Task>
        <Task>
          <svg viewBox="0 0 24 20" className="h-5 w-6"><rect x=".5" y=".5" width="23" height="18.500" fill="#f3f3f3" stroke="#777" /><rect x="7" y="4" width="11" height="13" fill="#0b6fc2" /><path d="M2 5H5M2 8H5M2 11H5M2 14H5M20 5H22M20 8H22M20 11H22" stroke="#888" /></svg>
        </Task>
        <Task><SiBlender className="size-[22px] text-[#ea7f12]" /></Task>
        <Task><BiLogoVisualStudio className="size-7 text-[#8455bd]" /></Task>
        <Task>
          <span className="flex size-5 items-center justify-center rounded-full bg-white">
            <svg viewBox="0 0 12 8" className="h-2 w-3" fill="none" strokeWidth="2"><circle cx="3.500" cy="4" r="2.500" stroke="#3f7de8" /><path d="M6 4H9" stroke="#2da94f" /><path d="M9 2.500H11.500V5.500H9" stroke="#e8821e" /></svg>
          </span>
        </Task>
        <Task dot="w-[6px] bg-[#c42b1c]" tile="bg-[#fbe3e6]">
          <svg viewBox="0 0 26 24" className="h-6 w-[26px]"><circle cx="14" cy="5" r="4" fill="#7b83eb" /><rect x="7" y="8" width="16" height="14" rx="4" fill="#7b83eb" /><rect x="0" y="6" width="14" height="14" rx="1.500" fill="#4b53bc" /><path d="M3.500 10H10.500M7 10V17" stroke="#fff" strokeWidth="1.800" /></svg>
          <span className="absolute left-[25px] top-[8px] flex size-[14px] items-center justify-center rounded-full bg-[#c4314b] text-[10px] text-white">3</span>
        </Task>
        <Task dot={GREY_DOT}>
          <span className="flex size-[22px] rounded-full bg-black"><FaSpotify className="size-6 -m-px text-[#1ed760]" /></span>
        </Task>
        <Task dot="w-4 bg-[#0078d4]" tile="bg-[#eef1fa] shadow-sm">
          <svg viewBox="0 0 24 24" className="size-6">
            <defs><linearGradient id="edge" x1="0" y1=".4" x2="1" y2=".3"><stop stopColor="#1c9be0" /><stop offset="1" stopColor="#5bdc6a" /></linearGradient></defs>
            <circle cx="12" cy="12" r="11.500" fill="#0f61b5" />
            <path d="M.8 10A11.500 11.500 0 0 1 23.500 11Q23.500 16 18 16Q13.500 16 14.500 13Q15 9 10 8.500Q4 8 .8 13Z" fill="url(#edge)" />
            <path d="M10 11Q8 18 15 20Q19 21 22 18Q23 19 20 20Q16 22.500 12 21Q6 18 10 11Z" fill="#e7f1fb" />
            <path d="M11 11.500Q10 14.500 13 16.500L15 15.500Q13.500 14.500 14.500 12.500Q13 10 11 11.500Z" fill="#e7f1fb" />
          </svg>
        </Task>
        <Task dot={GREY_DOT}>
          <span className="flex size-6 items-center justify-center rounded-full bg-[#2fb344]"><FaWhatsapp className="size-[21px] text-white" /></span>
          <span className="absolute left-[23px] top-[7px] flex size-4 items-center justify-center rounded-full bg-[#0078d4] text-[11px] text-white">8</span>
        </Task>
        <Task dot={GREY_DOT}>
          <span className="flex size-[22px] items-center justify-center rounded-[4px] bg-[#001e36] text-[11px] font-bold text-[#31a8ff]">Ps</span>
        </Task>
      </div>
      <div className="ml-auto pr-[23px] pb-[2px] text-right text-[11px] leading-4 text-[#333]">
        <div><Fit w={29}>14:32</Fit></div>
        <div><Fit w={62}>02/11/2023</Fit></div>
      </div>
    </footer>
  );
}

export default function App() {
  return (
    <div className="flex h-[1200px] w-[1920px] flex-col overflow-hidden bg-[#f7f7f7] font-['Open_Sans','Noto_Sans',sans-serif]">
      <TabBar />
      <UrlBar />
      <div className="relative mx-1 mb-1 h-[1078px] shrink-0 rounded-lg bg-[#1f1f1f] font-['Inter',sans-serif] text-white shadow-[0_0_3px_rgba(0,0,0,.35)]">
        <Header />
        <div className="mt-[10px] flex gap-[10px] px-5">
          <LeftPanel />
          <main className="h-[976px] w-[1192px] shrink-0 overflow-hidden rounded-[10px] bg-white">
            <div className="flex h-[43px] items-center justify-between pr-[17px] pl-[15px] text-[14px] font-semibold text-[#2c2d33]">
              <Fit w={31} className="-mt-1">Free</Fit>
              <svg viewBox="0 0 26 26" className="-mt-[6px] size-[26px]" fill="none" stroke="#666772" strokeWidth="1.300">
                <path d="M15.500 1.500V11H25.500M1.500 15.500H11.500V25" />
              </svg>
            </div>
            <MainMap />
          </main>
          <RightPanel />
        </div>
        <PanelTab label="Panel 1" side="left-[341px] rounded-r-[10px]" />
        <PanelTab label="Panel 2" side="left-[1511px] rounded-l-[10px]" />
      </div>
      <Taskbar />
    </div>
  );
}
